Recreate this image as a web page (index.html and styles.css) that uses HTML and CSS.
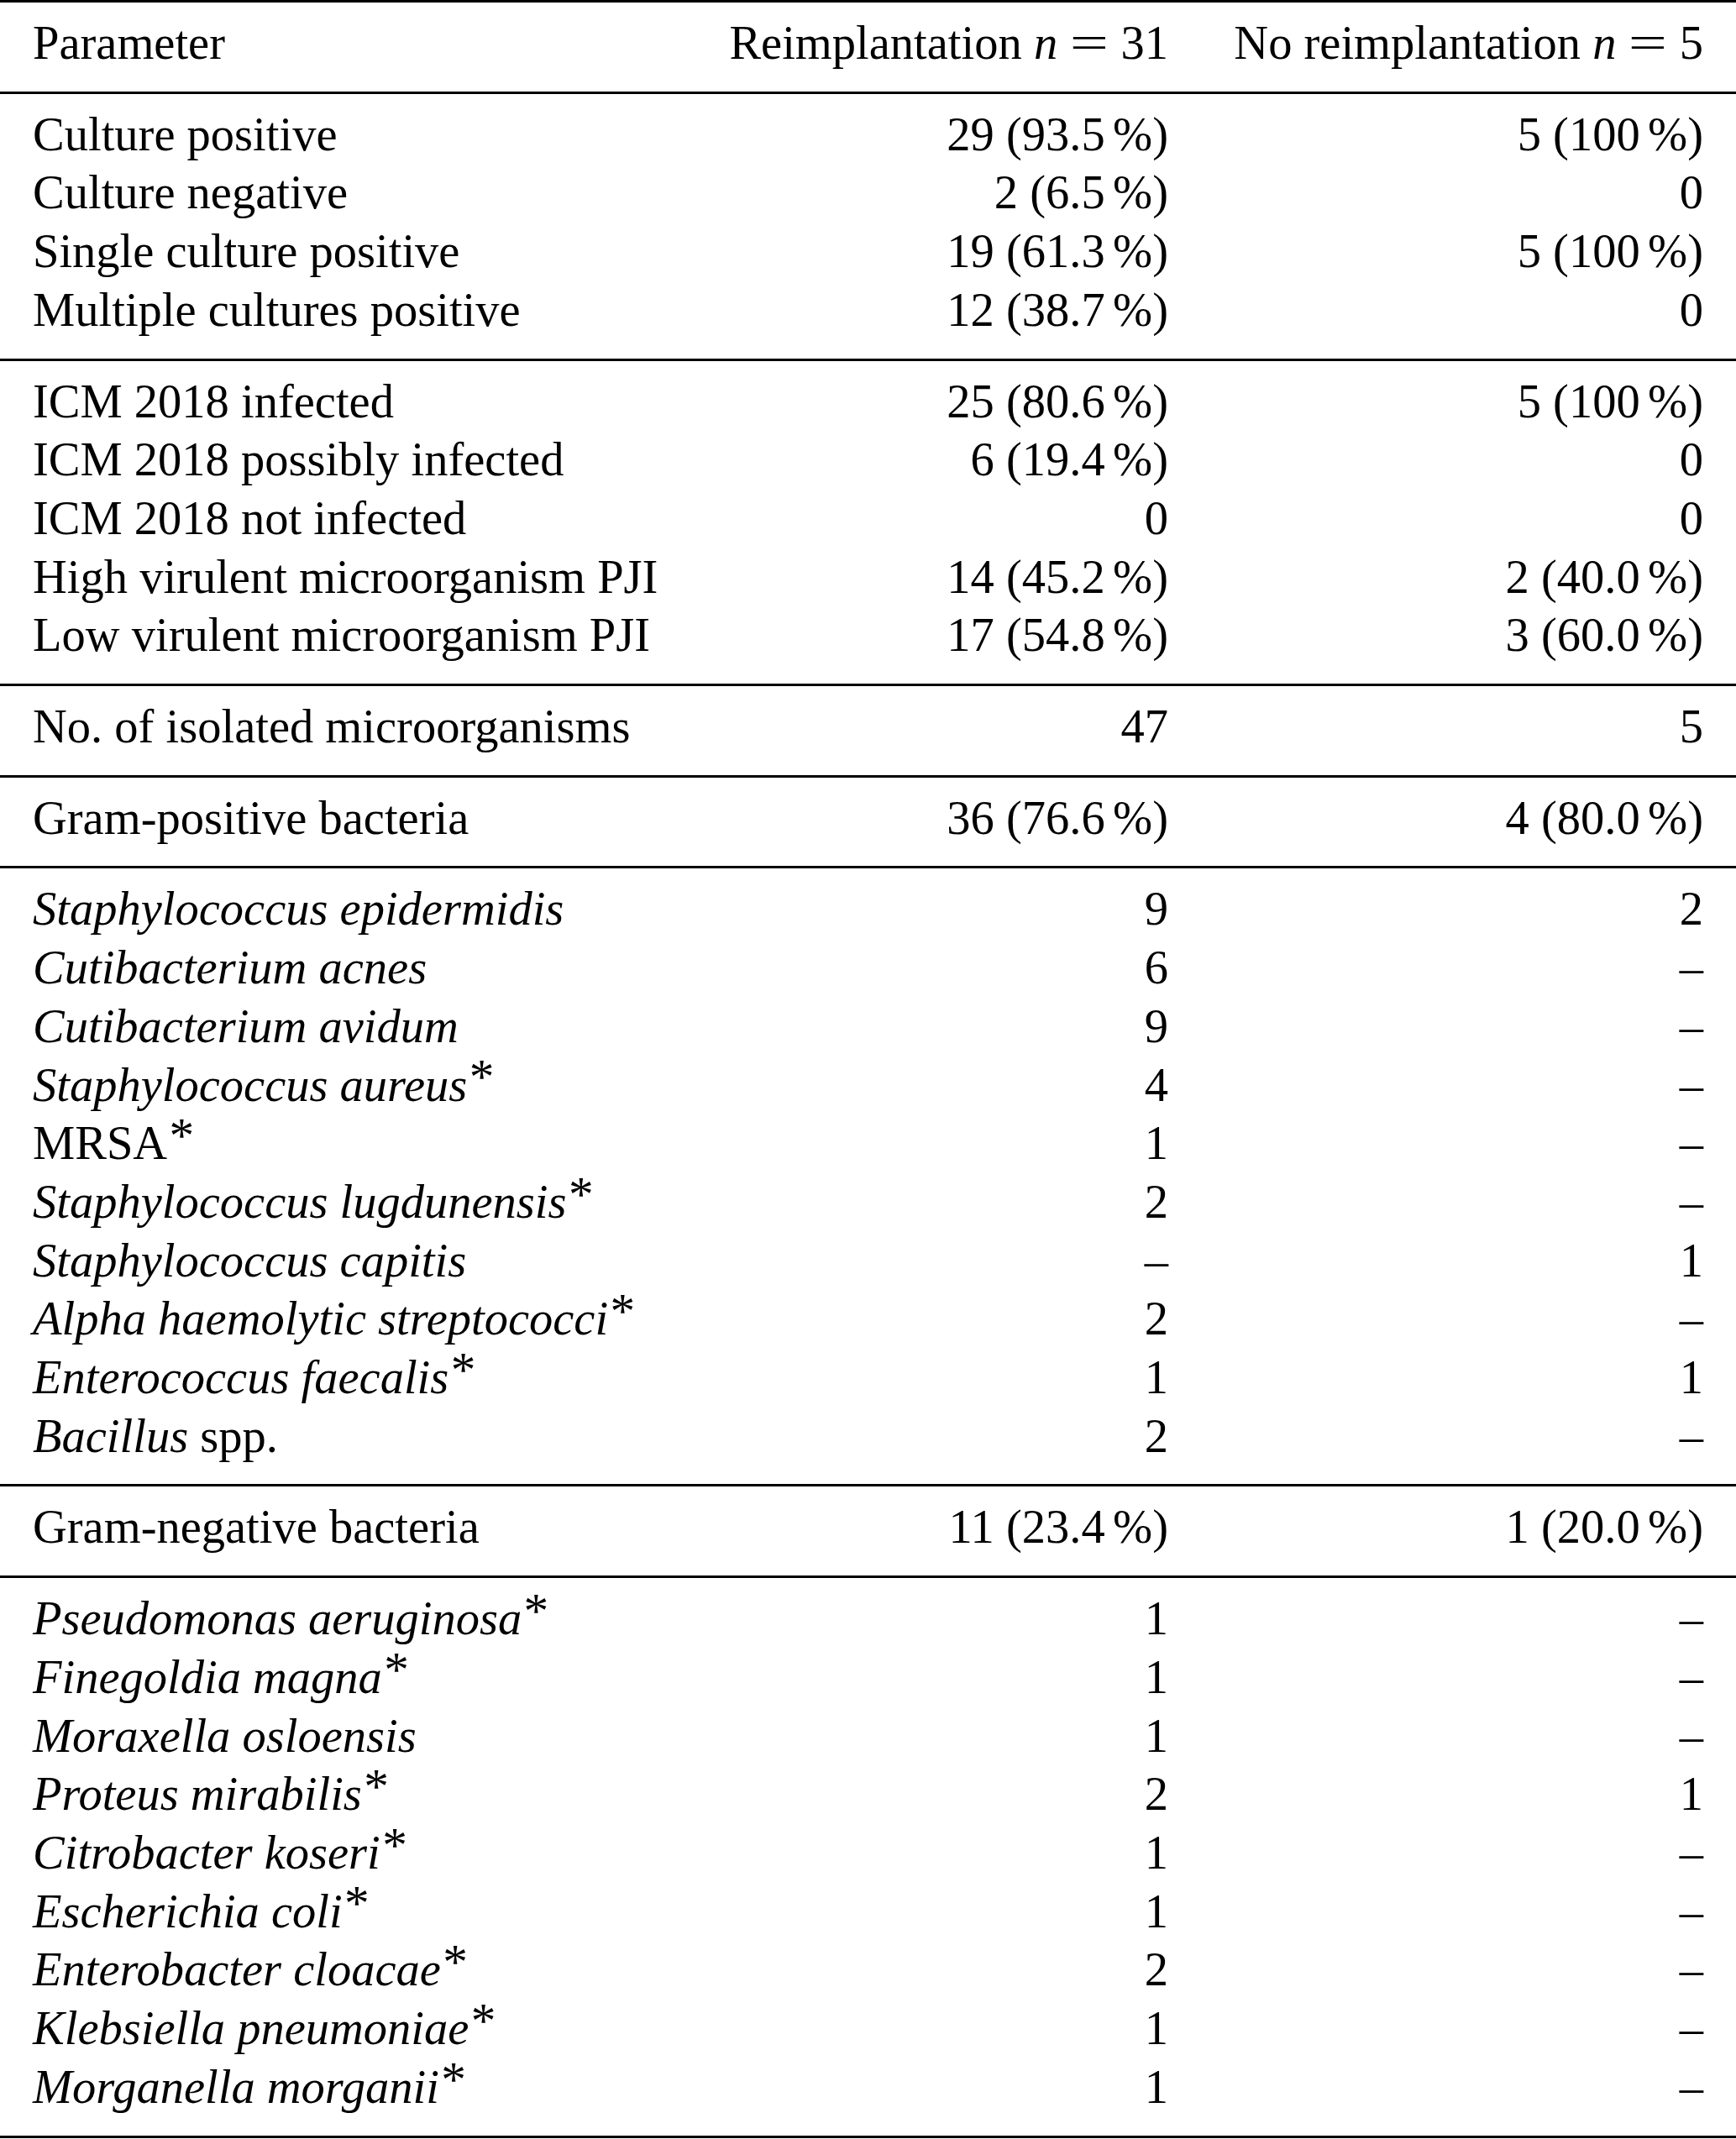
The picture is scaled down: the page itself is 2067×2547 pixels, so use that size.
FILE: index.html
```html
<!DOCTYPE html>
<html lang="en">
<head>
<meta charset="utf-8">
<title>Microbiology table</title>
<link rel="stylesheet" href="styles.css">
</head>
<body>
<div class="table">
  <div class="group">
    <div class="row">
      <div class="cell">Parameter</div>
      <div class="cell num">Reimplantation <i>n</i><span class="eq"><span>=</span></span>31</div>
      <div class="cell num">No reimplantation <i>n</i><span class="eq"><span>=</span></span>5</div>
    </div>
  </div>
  <div class="group">
    <div class="row"><div class="cell">Culture positive</div><div class="cell num">29 (93.5<span class="pc">%</span>)</div><div class="cell num">5 (100<span class="pc">%</span>)</div></div>
    <div class="row"><div class="cell">Culture negative</div><div class="cell num">2 (6.5<span class="pc">%</span>)</div><div class="cell num">0</div></div>
    <div class="row"><div class="cell">Single culture positive</div><div class="cell num">19 (61.3<span class="pc">%</span>)</div><div class="cell num">5 (100<span class="pc">%</span>)</div></div>
    <div class="row"><div class="cell">Multiple cultures positive</div><div class="cell num">12 (38.7<span class="pc">%</span>)</div><div class="cell num">0</div></div>
  </div>
  <div class="group">
    <div class="row"><div class="cell">ICM 2018 infected</div><div class="cell num">25 (80.6<span class="pc">%</span>)</div><div class="cell num">5 (100<span class="pc">%</span>)</div></div>
    <div class="row"><div class="cell">ICM 2018 possibly infected</div><div class="cell num">6 (19.4<span class="pc">%</span>)</div><div class="cell num">0</div></div>
    <div class="row"><div class="cell">ICM 2018 not infected</div><div class="cell num">0</div><div class="cell num">0</div></div>
    <div class="row"><div class="cell">High virulent microorganism PJI</div><div class="cell num">14 (45.2<span class="pc">%</span>)</div><div class="cell num">2 (40.0<span class="pc">%</span>)</div></div>
    <div class="row"><div class="cell">Low virulent microorganism PJI</div><div class="cell num">17 (54.8<span class="pc">%</span>)</div><div class="cell num">3 (60.0<span class="pc">%</span>)</div></div>
  </div>
  <div class="group">
    <div class="row"><div class="cell">No. of isolated microorganisms</div><div class="cell num">47</div><div class="cell num">5</div></div>
  </div>
  <div class="group">
    <div class="row"><div class="cell">Gram-positive bacteria</div><div class="cell num">36 (76.6<span class="pc">%</span>)</div><div class="cell num">4 (80.0<span class="pc">%</span>)</div></div>
  </div>
  <div class="group">
    <div class="row"><div class="cell"><i>Staphylococcus epidermidis</i></div><div class="cell num">9</div><div class="cell num">2</div></div>
    <div class="row"><div class="cell"><i>Cutibacterium acnes</i></div><div class="cell num">6</div><div class="cell num">–</div></div>
    <div class="row"><div class="cell"><i>Cutibacterium avidum</i></div><div class="cell num">9</div><div class="cell num">–</div></div>
    <div class="row"><div class="cell"><i>Staphylococcus aureus</i><span class="ast">*</span></div><div class="cell num">4</div><div class="cell num">–</div></div>
    <div class="row"><div class="cell">MRSA<span class="ast">*</span></div><div class="cell num">1</div><div class="cell num">–</div></div>
    <div class="row"><div class="cell"><i>Staphylococcus lugdunensis</i><span class="ast">*</span></div><div class="cell num">2</div><div class="cell num">–</div></div>
    <div class="row"><div class="cell"><i>Staphylococcus capitis</i></div><div class="cell num">–</div><div class="cell num">1</div></div>
    <div class="row"><div class="cell"><i>Alpha haemolytic streptococci</i><span class="ast">*</span></div><div class="cell num">2</div><div class="cell num">–</div></div>
    <div class="row"><div class="cell"><i>Enterococcus faecalis</i><span class="ast">*</span></div><div class="cell num">1</div><div class="cell num">1</div></div>
    <div class="row"><div class="cell"><i>Bacillus</i> spp.</div><div class="cell num">2</div><div class="cell num">–</div></div>
  </div>
  <div class="group">
    <div class="row"><div class="cell">Gram-negative bacteria</div><div class="cell num">11 (23.4<span class="pc">%</span>)</div><div class="cell num">1 (20.0<span class="pc">%</span>)</div></div>
  </div>
  <div class="group last">
    <div class="row"><div class="cell"><i>Pseudomonas aeruginosa</i><span class="ast">*</span></div><div class="cell num">1</div><div class="cell num">–</div></div>
    <div class="row"><div class="cell"><i>Finegoldia magna</i><span class="ast">*</span></div><div class="cell num">1</div><div class="cell num">–</div></div>
    <div class="row"><div class="cell"><i>Moraxella osloensis</i></div><div class="cell num">1</div><div class="cell num">–</div></div>
    <div class="row"><div class="cell"><i>Proteus mirabilis</i><span class="ast">*</span></div><div class="cell num">2</div><div class="cell num">1</div></div>
    <div class="row"><div class="cell"><i>Citrobacter koseri</i><span class="ast">*</span></div><div class="cell num">1</div><div class="cell num">–</div></div>
    <div class="row"><div class="cell"><i>Escherichia coli</i><span class="ast">*</span></div><div class="cell num">1</div><div class="cell num">–</div></div>
    <div class="row"><div class="cell"><i>Enterobacter cloacae</i><span class="ast">*</span></div><div class="cell num">2</div><div class="cell num">–</div></div>
    <div class="row"><div class="cell"><i>Klebsiella pneumoniae</i><span class="ast">*</span></div><div class="cell num">1</div><div class="cell num">–</div></div>
    <div class="row"><div class="cell"><i>Morganella morganii</i><span class="ast">*</span></div><div class="cell num">1</div><div class="cell num">–</div></div>
  </div>
</div>
</body>
</html>
```

FILE: styles.css
```css
html, body {
  margin: 0;
  padding: 0;
  background: #ffffff;
}

body {
  font-family: "Liberation Serif", "Times New Roman", serif;
  font-size: 56.5px;
  color: #000000;
}

.table {
  width: 2067px;
}

.group {
  border-top: 3px solid #000000;
  padding: 14px 0 22px;
}

.group.last {
  border-bottom: 3px solid #000000;
}

.row {
  display: grid;
  grid-template-columns: 827px 603px 637px;
  line-height: 69.7px;
}

.cell {
  padding: 0 39px;
  white-space: nowrap;
}

.num {
  text-align: right;
}

.eq {
  display: inline-block;
  width: 0.778em;
  margin: 0 0.278em;
  text-align: center;
}

.eq span {
  display: inline-block;
  transform: scaleX(1.45);
}

.pc {
  margin-left: 0.167em;
}

.ast {
  display: inline-block;
  margin-left: 0.04em;
  font-size: 1.05em;
  line-height: 0;
  vertical-align: 0.14em;
}
```
